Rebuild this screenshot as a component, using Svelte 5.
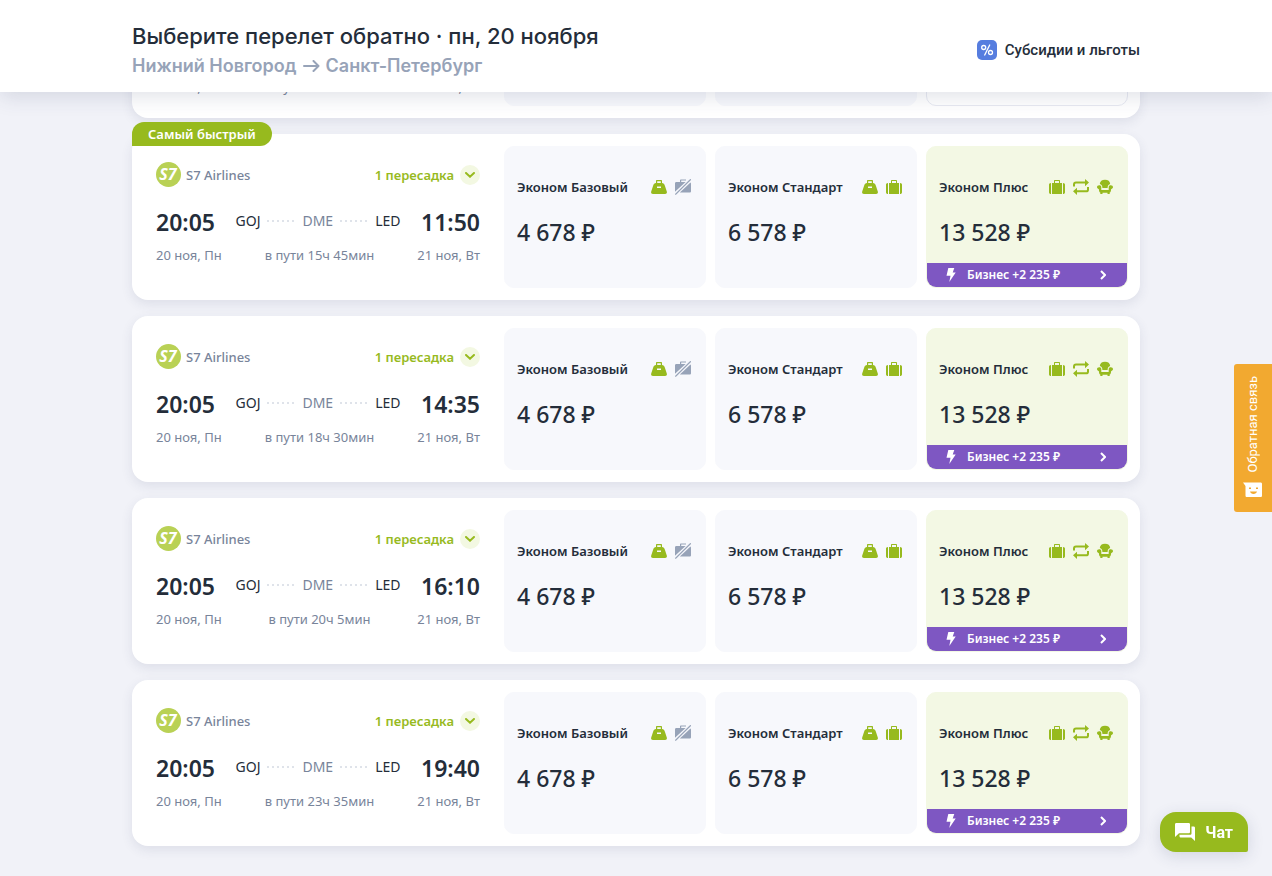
<script lang="ts">
	type Icon = 'bag' | 'nocase' | 'case' | 'swap' | 'seat';

	type Tariff = {
		name: string;
		price: string;
		icons: Icon[];
		plus?: boolean;
	};

	const tariffs: Tariff[] = [
		{ name: 'Эконом Базовый', price: '4 678 ₽', icons: ['bag', 'nocase'] },
		{ name: 'Эконом Стандарт', price: '6 578 ₽', icons: ['bag', 'case'] },
		{ name: 'Эконом Плюс', price: '13 528 ₽', icons: ['case', 'swap', 'seat'], plus: true }
	];

	const flights = [
		{ arrive: '11:50', duration: 'в пути 15ч 45мин', fastest: true },
		{ arrive: '14:35', duration: 'в пути 18ч 30мин', fastest: false },
		{ arrive: '16:10', duration: 'в пути 20ч 5мин', fastest: false },
		{ arrive: '19:40', duration: 'в пути 23ч 35мин', fastest: false }
	];
</script>

{#snippet icon(type: Icon)}
	<svg class="icon" class:icon_muted={type === 'nocase'} width="16" height="16" viewBox="0 0 16 16" aria-hidden="true">
		{#if type === 'bag'}
			<path
				fill="currentColor"
				fill-rule="evenodd"
				d="M5 4V2C5 1.300 5.400 1 6 1h4c.6 0 1 .3 1 1v2c1.500.2 2.300 1 2.900 2.700L15.800 12.500c.4 1.500-.2 2.500-1.700 2.500H1.900C.4 15-.2 14 .2 12.500L2.100 6.700C2.700 5 3.500 4.200 5 4zm1.200 0h3.600V2.200H6.200zM6 7.500V9h4V7.500z"
			/>
		{:else if type === 'case'}
			<path
				fill="currentColor"
				fill-rule="evenodd"
				d="M3 4h2V2c0-.7.4-1 1-1h4c.6 0 1 .3 1 1v2h2v11H3zm3 0h4V2H6zM2 4v11C.7 14.900 0 14.300 0 13.200V5.800C0 4.700.7 4.100 2 4zM14 4c1.300.1 2 .7 2 1.800v7.400c0 1.100-.7 1.700-2 1.800z"
			/>
		{:else if type === 'nocase'}
			<path
				fill="currentColor"
				d="M0 4.500C0 3.500.5 3 1.500 3H5V1.500C5 .8 5.400.4 6 .4h5v1.100H6.200V3h4.400L0 12.800z"
			/>
			<path fill="currentColor" d="M15.500 3.500c.3.3.5.6.5 1.100v7.400c0 1-.5 1.500-1.500 1.500H4.800z" />
			<path stroke="currentColor" stroke-width="1.300" d="M.3 15.500 15.800.3" />
		{:else if type === 'swap'}
			<path
				fill="none"
				stroke="currentColor"
				stroke-width="2"
				d="M1 7.500V5.500C1 4.300 1.700 3.600 3 3.600h10M15 8v2.400c0 1.200-.7 1.900-2 1.900H3"
			/>
			<path fill="currentColor" d="m12 0 4 3.600-4 3.600zM4 8.700 0 12.300l4 3.600z" />
		{:else}
			<path
				fill="currentColor"
				d="M2.800 5C3 2.200 4.900.7 8 .7S13 2.200 13.200 5c-1.700.3-2.500 1.400-2.600 4H5.400C5.300 6.400 4.500 5.300 2.800 5z"
			/>
			<path
				fill="currentColor"
				d="M4.300 7.900V11h7.400V7.900c.1-1.100.9-1.700 2-1.700C15.200 6.200 16 7 16 8.100s-.7 1.800-1.900 2.100c-.1 2-.5 3-1.400 3.400V15h-2.200v-1.200h-5V15H3.300v-1.400c-.9-.4-1.300-1.400-1.400-3.400C.7 9.900 0 9.200 0 8.100s.8-1.900 2.300-1.900c1.100 0 1.900.6 2 1.700z"
			/>
		{/if}
	</svg>
{/snippet}

{#snippet dates(duration: string)}
	<div class="flight__dates">
		<span>20 ноя, Пн</span>
		<span>{duration}</span>
		<span>21 ноя, Вт</span>
	</div>
{/snippet}

<div class="page">
	<header class="header">
		<div class="header__inner">
			<div>
				<h1 class="header__title">Выберите перелет обратно · пн, 20 ноября</h1>
				<p class="header__route">
					Нижний Новгород
					<svg width="17" height="12" viewBox="0 0 17 12" fill="none" aria-hidden="true">
						<path d="M1 6h14M10.500 1l5 5-5 5" stroke="currentColor" stroke-width="2" stroke-linecap="round" stroke-linejoin="round" />
					</svg>
					Санкт-Петербург
				</p>
			</div>
			<a class="header__link" href="#subsidies">
				<svg width="20" height="20" viewBox="0 0 20 20" fill="none" aria-hidden="true">
					<rect width="20" height="20" rx="5" fill="#567ddf" />
					<circle cx="6.700" cy="7.500" r="2" stroke="#fff" stroke-width="1.300" />
					<circle cx="13.500" cy="12.500" r="2" stroke="#fff" stroke-width="1.300" />
					<path d="m12.700 5-5 10" stroke="#fff" stroke-width="1.300" stroke-linecap="round" />
				</svg>
				Субсидии и льготы
			</a>
		</div>
	</header>

	<main class="list">
		<article class="card card_short">
			<div class="flight">
				{@render dates('в пути 15ч 45мин')}
			</div>
			<div class="tariff"></div>
			<div class="tariff"></div>
			<div class="tariff tariff_empty"></div>
		</article>

		{#each flights as flight}
			<article class="card">
				{#if flight.fastest}
					<span class="card__badge">Самый быстрый</span>
				{/if}
				<div class="flight">
					<div class="flight__head">
						<svg width="26" height="26" viewBox="0 0 26 26" aria-hidden="true">
							<circle cx="12.500" cy="12.500" r="12.500" fill="#b9d155" />
							<text class="s7" x="12" y="18" text-anchor="middle">S7</text>
						</svg>
						<span class="flight__airline">S7 Airlines</span>
						<button type="button" class="flight__stops">
							1 пересадка
							<span class="flight__chevron">
								<svg width="10" height="6" viewBox="0 0 10 6" fill="none" aria-hidden="true">
									<path d="m1 1 4 3.700L9 1" stroke="currentColor" stroke-width="2" stroke-linecap="round" />
								</svg>
							</span>
						</button>
					</div>
					<div class="flight__route">
						<time class="flight__time">20:05</time>
						<div class="flight__points">
							<span>GOJ</span>
							<i class="dots"></i>
							<span class="flight__via">DME</span>
							<i class="dots"></i>
							<span>LED</span>
						</div>
						<time class="flight__time">{flight.arrive}</time>
					</div>
					{@render dates(flight.duration)}
				</div>
				{#each tariffs as tariff}
					<div class="tariff" class:tariff_plus={tariff.plus}>
						<button type="button" class="tariff__btn">
							<span class="tariff__head">
								<span>{tariff.name}</span>
								<span class="tariff__icons">
									{#each tariff.icons as type}
										{@render icon(type)}
									{/each}
								</span>
							</span>
							<span class="tariff__price">{tariff.price}</span>
						</button>
						{#if tariff.plus}
							<button type="button" class="business">
								<svg width="10" height="14" viewBox="0 0 10 14" aria-hidden="true">
									<path fill="#fff" d="M2.300 0h6L6.700 4.400h3L3.300 14l1.200-6.200H.5z" />
								</svg>
								<span class="business__text">Бизнес +2 235 ₽</span>
								<svg width="6" height="10" viewBox="0 0 6 10" fill="none" aria-hidden="true">
									<path d="m1 1 4 4-4 4" stroke="#fff" stroke-width="2" />
								</svg>
							</button>
						{/if}
					</div>
				{/each}
			</article>
		{/each}
	</main>

	<button type="button" class="feedback">
		<span class="feedback__text">Обратная связь</span>
		<svg width="20" height="16" viewBox="0 0 20 16" aria-hidden="true">
			<path fill="#fff" d="M0 .500h17.500c1 0 1.500.500 1.500 1.500v11.500c0 1-.5 1.500-1.500 1.500H4c-1 0-1.500-.5-1.500-1.500V4z" />
			<path fill="#f2a930" d="M6 5.500h2V7H6zM13 5.500h2V7h-2zM7 9.500h7c-.4 1.600-1.700 2.500-3.500 2.500S7.400 11.100 7 9.500z" />
		</svg>
	</button>

	<button type="button" class="chat">
		<svg width="20" height="18" viewBox="0 0 20 18" aria-hidden="true">
			<path fill="#fff" d="M1.500 0h12c1 0 1.500.5 1.500 1.500v7.200c0 1-.5 1.500-1.500 1.500H4L0 14V1.500C0 .5.500 0 1.500 0z" />
			<path fill="#fff" d="M16.500 3.500h2c1 0 1.500.5 1.500 1.500v13l-3.800-3.500H6c-1 0-1.500-.5-1.500-1.500v-1.300h10.500c1 0 1.500-.5 1.500-1.500z" />
		</svg>
		Чат
	</button>
</div>

<style>
	:global(body) {
		background: #f1f2f8;
	}

	.page {
		font-family: 'Noto Sans', 'Open Sans', sans-serif;
		color: #242d3a;
	}

	button {
		border: none;
		padding: 0;
		background: none;
		font: inherit;
		color: inherit;
		cursor: pointer;
	}

	.header {
		position: sticky;
		top: 0;
		z-index: 10;
		background: #fff;
		box-shadow: 0 4px 20px rgba(50, 60, 100, 0.16);
	}

	.header__inner {
		display: flex;
		justify-content: space-between;
		align-items: center;
		box-sizing: border-box;
		max-width: 1008px;
		min-height: 92px;
		margin: 0 auto;
		padding-top: 8px;
		font-family: Inter, 'Liberation Sans', sans-serif;
	}

	.header__title {
		margin: 0;
		font-size: 22px;
		line-height: 32px;
		font-weight: 500;
	}

	.header__route {
		display: flex;
		align-items: center;
		gap: 6px;
		margin: 0;
		font-size: 18px;
		line-height: 28px;
		font-weight: 600;
		color: #97a3b8;
	}

	.header__link {
		display: flex;
		align-items: center;
		gap: 8px;
		font-family: Roboto, sans-serif;
		font-size: 15px;
		font-weight: 500;
		color: inherit;
		text-decoration: none;
	}

	.list {
		display: flex;
		flex-direction: column;
		gap: 16px;
		max-width: 1008px;
		margin: -32px auto 0;
		padding-bottom: 30px;
	}

	.card {
		position: relative;
		display: grid;
		grid-template-columns: minmax(0, 1fr) repeat(3, 202px);
		gap: 9px;
		box-sizing: border-box;
		min-height: 166px;
		padding: 12px;
		border-radius: 16px;
		background: #fff;
		box-shadow: 0 4px 12px rgba(50, 60, 100, 0.1);
	}

	.card_short {
		min-height: 58px;
	}

	.card__badge {
		position: absolute;
		top: -12px;
		left: 0;
		padding: 0 16px;
		border-radius: 12px 12px 12px 0;
		background: #97ba1e;
		font-size: 13px;
		line-height: 24px;
		font-weight: 600;
		color: #fff;
	}

	.flight {
		padding: 16px 15px 0 12px;
		font-size: 13px;
		color: #78849a;
	}

	.card_short .flight {
		padding-top: 5px;
	}

	.flight__head {
		display: flex;
		align-items: center;
	}

	.s7 {
		font: italic 700 16px 'Open Sans', sans-serif;
		fill: #fff;
	}

	.flight__airline {
		margin-left: 4px;
		font-weight: 500;
	}

	.flight__stops {
		display: flex;
		align-items: center;
		gap: 6px;
		margin-left: auto;
		font-weight: 600;
		color: #97ba1e;
	}

	.flight__chevron {
		display: flex;
		align-items: center;
		justify-content: center;
		width: 20px;
		height: 20px;
		border-radius: 50%;
		background: #f3f8e2;
	}

	.flight__route {
		display: flex;
		justify-content: space-between;
		align-items: flex-start;
		margin: 18px 0 7px;
		line-height: 32px;
	}

	.flight__time {
		font-size: 23px;
		font-weight: 600;
		color: #242d3a;
	}

	.flight__points {
		display: flex;
		align-items: center;
		font-size: 14px;
		line-height: 30px;
		color: #242d3a;
	}

	.flight__via {
		color: #78849a;
	}

	.dots {
		width: 28px;
		height: 2px;
		margin: 0 7px;
		background: repeating-linear-gradient(to right, #dfe3ea 0 2px, transparent 2px 5px);
	}

	.flight__dates {
		display: flex;
		justify-content: space-between;
		line-height: 20px;
	}

	.tariff {
		display: flex;
		flex-direction: column;
		border: 1px solid #f7f8fc;
		border-radius: 10px;
		background: #f7f8fc;
		overflow: hidden;
	}

	.tariff_plus {
		border-color: #f3f8e4;
		background: #f3f8e4;
	}

	.tariff_empty {
		border-color: #e8eaf2;
		background: #fff;
	}

	.tariff__btn {
		display: flex;
		flex: 1;
		flex-direction: column;
		padding: 30px 14px 0 12px;
		text-align: left;
	}

	.tariff__head {
		display: flex;
		justify-content: space-between;
		align-items: center;
		width: 100%;
		font-size: 13px;
		line-height: 20px;
		font-weight: 600;
		white-space: nowrap;
	}

	.tariff__icons {
		display: flex;
		gap: 8px;
		color: #97ba1e;
	}

	.icon_muted {
		color: #97a3b8;
	}

	.tariff__price {
		margin-top: 20px;
		font-size: 23px;
		line-height: 30px;
		font-weight: 500;
	}

	.business {
		display: flex;
		align-items: center;
		padding: 0 21px 0 19px;
		background: #7e57c2;
		font-size: 12px;
		line-height: 24px;
		font-weight: 600;
		color: #fff;
	}

	.business__text {
		margin: 0 auto 0 11px;
	}

	.feedback {
		position: fixed;
		top: 364px;
		right: 0;
		z-index: 5;
		display: flex;
		flex-direction: column;
		align-items: center;
		gap: 9px;
		width: 38px;
		padding: 12px 0 14px;
		border-radius: 3px 0 0 3px;
		background: #f2a930;
		color: #fff;
	}

	.feedback__text {
		writing-mode: vertical-rl;
		transform: rotate(180deg);
		font-family: Roboto, sans-serif;
		font-size: 13px;
		line-height: 16px;
	}

	.chat {
		position: fixed;
		right: 24px;
		bottom: 24px;
		z-index: 5;
		display: flex;
		align-items: center;
		gap: 10px;
		height: 40px;
		padding: 0 15px;
		border-radius: 16px 16px 2px 16px;
		background: #97ba1e;
		box-shadow: 0 4px 16px rgba(50, 60, 100, 0.16);
		font-family: Roboto, sans-serif;
		font-size: 16px;
		font-weight: 700;
		color: #fff;
	}
</style>
